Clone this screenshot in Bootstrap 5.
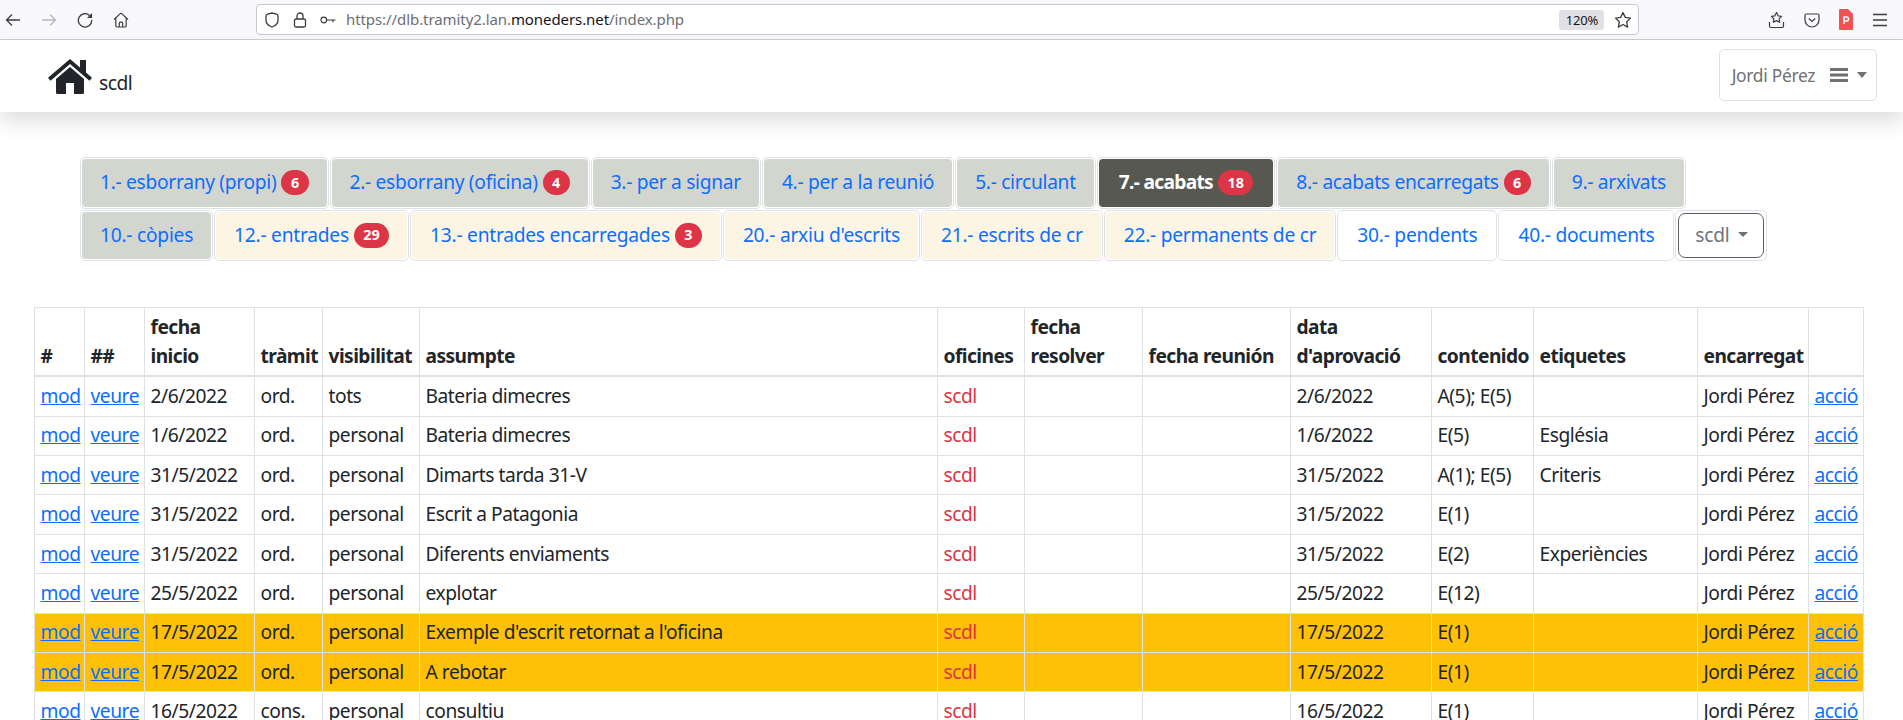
<!DOCTYPE html>
<html lang="ca">
<head>
  <meta charset="UTF-8" />
  <meta name="viewport" content="width=device-width, initial-scale=1" />
  <title>scdl</title>
  <link href="https://cdn.jsdelivr.net/npm/bootstrap@5.3.0/dist/css/bootstrap.min.css" rel="stylesheet" />
  <style>
    html { font-size: 19.2px; }
    body {
      font-family: "Noto Sans", "Liberation Sans", sans-serif;
      letter-spacing: -0.45px;
      color: #212529;
    }

    /* barra del navegador */
    .browser-bar {
      height: 40px;
      background: #f9f9fb;
      border-bottom: 1px solid #cfcfd8;
      font-size: 15px;
      padding: 0 15px 0 0;
    }
    .browser-btn { width: 36px; padding-left: 5px; color: #3c3c42; }
    .browser-btn.off { color: #b5b5ba; }
    .browser-btn svg, .url-box svg, .browser-tools svg { display: block; }
    .url-box {
      width: 1383px;
      height: 31px;
      margin-left: 112px;
      background: #fff;
      border: 1px solid #c8c8cf;
      border-radius: 4px;
      padding: 0 6px 0 7px;
      color: #3c3c42;
    }
    .url-gap { margin-left: 12px; }
    .url-text { color: #6d6d74; margin-left: 10px; letter-spacing: -0.08px; white-space: nowrap; }
    .url-text b { color: #15141a; font-weight: 400; }
    .zoom-chip {
      background: #e0e0e6;
      border-radius: 3px;
      width: 45px;
      height: 20px;
      line-height: 20px;
      font-size: 13px;
      text-align: center;
      color: #15141a;
      letter-spacing: -0.2px;
    }
    .browser-tools { gap: 19px; color: #3c3c42; }

    /* barra superior */
    .top-bar { height: 72px; padding: 0 26px 0 48px; position: relative; z-index: 2; }
    .brand-link { color: #212529; text-decoration: none; font-size: 19.2px; line-height: 1; }
    .brand-link span { margin: 0 0 1px 7px; }
    .user-btn {
      width: 158px;
      height: 52px;
      margin-top: -2px;
      border: 1px solid #dfdfdf;
      border-radius: 5px;
      color: #717171;
      font-size: 17.4px;
      background: #fff;
      padding: 0 0 0 3px;
      letter-spacing: -0.3px;
    }
    .user-btn:hover, .user-btn:focus { color: #717171; border-color: #dfdfdf; }
    .user-menu-icon { margin-left: 5px; }

    /* pestanyes */
    .tab-area { padding: 45px 0 0 80px; letter-spacing: -0.3px; }
    .tab-row { flex-wrap: nowrap; }
    .tab-row-low { letter-spacing: -0.25px; }
    .tab-cell {
      border: 1px solid #dee2e6;
      border-radius: 5px;
      padding: 1px;
      margin-right: 1px;
      height: 51.5px;
      margin-bottom: 1px;
    }
    .tab-cell a {
      display: flex;
      align-items: center;
      gap: 5px;
      height: 100%;
      padding: 0 18px;
      border-radius: 4px;
      color: #0d6efd;
      white-space: nowrap;
      text-decoration: none;
    }
    .tab-grey a { background: #d3d5cf; }
    .tab-cream a { background: #fdf5e3; }
    .tab-cell.tab-on a { background: #575851; color: #fff; font-weight: 700; letter-spacing: -0.7px; padding: 0 20px; }
    .tab-badge { font-size: 14.4px; padding: 5.5px 9.4px; letter-spacing: 0; }
    .office-wrap { border: 1px solid #dee2e6; border-radius: 5px; padding: 2px; height: 51.5px; }
    .office-btn {
      width: 86px;
      height: 45px;
      padding: 0;
      font-size: 19.2px;
      letter-spacing: inherit;
      border-color: #565e64;
      color: #6c757d;
    }
    .office-btn::after { margin-left: 8px; }

    /* taula */
    .table-area { padding: 45px 0 0 34px; }
    .doc-table {
      width: 1829px;
      table-layout: fixed;
      margin: 0;
      border-color: #dee2e6;
    }
    .doc-table thead th { font-weight: 700; line-height: 28.8px; border-bottom-width: 2px; letter-spacing: -0.55px; }
    .doc-table th, .doc-table td { padding: 4.8px 5px 4.8px 5.5px; white-space: nowrap; }
    .doc-table th.wrap-head { white-space: normal; }
    .doc-table tr.row-back > * { background: #ffc107; }
    .office-name { color: #dc3545; }
    .w1 { width: 50px; } .w2 { width: 60px; } .w3 { width: 110px; } .w4 { width: 68px; }
    .w5 { width: 97px; } .w6 { width: 518px; } .w7 { width: 87px; } .w8 { width: 118px; }
    .w9 { width: 148px; } .w10 { width: 141px; } .w11 { width: 102px; } .w12 { width: 164px; }
    .w13 { width: 111px; } .w14 { width: 55px; }
  </style>
</head>
<body class="vh-100 overflow-hidden">

  <div class="browser-bar d-flex align-items-center">
    <div class="browser-btn">
      <svg width="16" height="16" viewBox="0 0 16 16" fill="none" stroke="currentColor" stroke-width="1.3"><path d="M15 8H1.500M7 2.500 1.500 8 7 13.500"/></svg>
    </div>
    <div class="browser-btn off">
      <svg width="16" height="16" viewBox="0 0 16 16" fill="none" stroke="currentColor" stroke-width="1.3"><path d="M1 8h13.500M9 2.500 14.500 8 9 13.500"/></svg>
    </div>
    <div class="browser-btn">
      <svg width="16" height="16" viewBox="0 0 16 16" fill="none" stroke="currentColor" stroke-width="1.3"><path d="M12.800 3.700A6.700 6.700 0 1 0 14.700 8"/><path fill="currentColor" stroke="none" d="M15 1v5h-5z"/></svg>
    </div>
    <div class="browser-btn">
      <svg width="16" height="16" viewBox="0 0 16 16" fill="none" stroke="currentColor" stroke-width="1.200" stroke-linejoin="round"><path d="M1 7.500 7 1.900a1.500 1.500 0 0 1 2 0l6 5.600"/><path d="M2.800 6v7.500a1.500 1.500 0 0 0 1.500 1.500h7.400a1.500 1.500 0 0 0 1.500-1.500V6"/><path d="M6.300 15v-3.800a1 1 0 0 1 1-1h1.400a1 1 0 0 1 1 1V15"/></svg>
    </div>

    <div class="url-box d-flex align-items-center">
      <svg width="16" height="16" viewBox="0 0 16 16" fill="none" stroke="currentColor" stroke-width="1.3"><path d="M8 1 3.500 2.200A2 2 0 0 0 2 4.100V8c0 3.200 2.500 5.800 6 7 3.500-1.200 6-3.800 6-7V4.100a2 2 0 0 0-1.500-1.900z"/></svg>
      <svg class="url-gap" width="16" height="16" viewBox="0 0 16 16" fill="none" stroke="currentColor" stroke-width="1.3"><rect x="2.500" y="7" width="11" height="8" rx="1.500"/><path d="M5 7V4a3 3 0 0 1 6 0v3"/></svg>
      <svg class="url-gap" width="16" height="16" viewBox="0 0 16 16" fill="none" stroke="currentColor" stroke-width="1.200"><circle cx="3.800" cy="8" r="2.800"/><path d="M6.600 8H15.500M13 8v2.200"/></svg>
      <span class="url-text">https://dlb.tramity2.lan.<b>moneders.net</b>/index.php</span>
      <span class="zoom-chip ms-auto">120%</span>
      <svg class="ms-2" width="18" height="18" viewBox="0 0 18 18" fill="none" stroke="currentColor" stroke-width="1.3" stroke-linejoin="round"><path d="m9 1.500 2.300 4.900 5.200.700-3.800 3.700.9 5.300L9 13.500l-4.600 2.600.9-5.300-3.800-3.700 5.200-.700z"/></svg>
    </div>

    <div class="browser-tools d-flex align-items-center ms-auto">
      <svg width="17" height="18" viewBox="0 0 17 18" fill="none" stroke="currentColor" stroke-width="1.200" stroke-linejoin="round"><path d="m8.500 1.500 1.600 3.300 3.500.500-2.500 2.500.6 3.500-3.200-1.700-3.200 1.700.6-3.500-2.500-2.500 3.500-.500z"/><path d="M1.500 11v4a1.500 1.500 0 0 0 1.500 1.500h11a1.500 1.500 0 0 0 1.500-1.500v-4"/></svg>
      <svg width="16" height="16" viewBox="0 0 16 16" fill="none" stroke="currentColor" stroke-width="1.200"><path d="M2.500 2h11A1.500 1.500 0 0 1 15 3.500V8A7 7 0 0 1 1 8V3.500A1.500 1.500 0 0 1 2.500 2z"/><path d="m4.800 6.500 3.200 3 3.200-3"/></svg>
      <svg width="14" height="21" viewBox="0 0 14 21"><path fill="#ed5453" d="M1 0h8l5 5v15a1 1 0 0 1-1 1H1a1 1 0 0 1-1-1V1a1 1 0 0 1 1-1z"/><path fill="none" stroke="#fff" stroke-width="1.500" d="M5 15V8h2.500a2 2 0 0 1 0 4H5"/></svg>
      <svg width="16" height="14" viewBox="0 0 16 14" fill="none" stroke="currentColor" stroke-width="1.300"><path d="M1 1.500h14M1 7h14M1 12.500h14"/></svg>
    </div>
  </div>

  <nav class="top-bar bg-white shadow d-flex align-items-center justify-content-between">
    <a class="brand-link d-flex align-items-end" href="#">
      <svg width="44" height="35" viewBox="0 0 44 35"><path fill="#212529" d="M8 20 22 8l14 12v13.500a1.500 1.500 0 0 1-1.500 1.500H26V24h-8v11H9.500A1.500 1.500 0 0 1 8 33.500z"/><path fill="#212529" d="M22 0 32 8.500V1h6v12.600l6 5.100-2.500 3L22 5 2.500 21.700 0 18.700z"/></svg>
      <span>scdl</span>
    </a>
    <button class="btn user-btn d-flex align-items-center justify-content-center gap-2" type="button">
      Jordi Pérez
      <svg class="user-menu-icon" width="18" height="14" viewBox="0 0 18 14" fill="#717171"><rect width="18" height="3"/><rect y="5.500" width="18" height="3"/><rect y="11" width="18" height="3"/></svg>
      <svg width="10" height="6" viewBox="0 0 10 6" fill="#717171"><path d="M0 0h10L5 6z"/></svg>
    </button>
  </nav>

  <div class="tab-area">
    <ul class="nav tab-row">
      <li class="tab-cell tab-grey"><a href="#">1.- esborrany (propi) <span class="badge rounded-pill text-bg-danger tab-badge">6</span></a></li>
      <li class="tab-cell tab-grey"><a href="#">2.- esborrany (oficina) <span class="badge rounded-pill text-bg-danger tab-badge">4</span></a></li>
      <li class="tab-cell tab-grey"><a href="#">3.- per a signar</a></li>
      <li class="tab-cell tab-grey"><a href="#">4.- per a la reunió</a></li>
      <li class="tab-cell tab-grey"><a href="#">5.- circulant</a></li>
      <li class="tab-cell tab-on"><a href="#">7.- acabats <span class="badge rounded-pill text-bg-danger tab-badge">18</span></a></li>
      <li class="tab-cell tab-grey"><a href="#">8.- acabats encarregats <span class="badge rounded-pill text-bg-danger tab-badge">6</span></a></li>
      <li class="tab-cell tab-grey"><a href="#">9.- arxivats</a></li>
    </ul>
    <ul class="nav tab-row tab-row-low">
      <li class="tab-cell tab-grey"><a href="#">10.- còpies</a></li>
      <li class="tab-cell tab-cream"><a href="#">12.- entrades <span class="badge rounded-pill text-bg-danger tab-badge">29</span></a></li>
      <li class="tab-cell tab-cream"><a href="#">13.- entrades encarregades <span class="badge rounded-pill text-bg-danger tab-badge">3</span></a></li>
      <li class="tab-cell tab-cream"><a href="#">20.- arxiu d'escrits</a></li>
      <li class="tab-cell tab-cream"><a href="#">21.- escrits de cr</a></li>
      <li class="tab-cell tab-cream"><a href="#">22.- permanents de cr</a></li>
      <li class="tab-cell"><a href="#">30.- pendents</a></li>
      <li class="tab-cell"><a href="#">40.- documents</a></li>
      <li class="office-wrap">
        <button class="btn btn-outline-secondary office-btn dropdown-toggle" type="button" data-bs-toggle="dropdown">scdl</button>
      </li>
    </ul>
  </div>

  <div class="table-area">
    <table class="table table-bordered table-sm doc-table">
      <colgroup>
        <col class="w1"><col class="w2"><col class="w3"><col class="w4"><col class="w5"><col class="w6"><col class="w7">
        <col class="w8"><col class="w9"><col class="w10"><col class="w11"><col class="w12"><col class="w13"><col class="w14">
      </colgroup>
      <thead>
        <tr>
          <th>#</th><th>##</th><th class="wrap-head">fecha inicio</th><th>tràmit</th><th>visibilitat</th><th>assumpte</th><th>oficines</th>
          <th class="wrap-head">fecha resolver</th><th>fecha reunión</th><th class="wrap-head">data d'aprovació</th><th>contenido</th><th>etiquetes</th><th>encarregat</th><th></th>
        </tr>
      </thead>
      <tbody id="rows"></tbody>
    </table>
  </div>

  <script src="https://cdn.jsdelivr.net/npm/bootstrap@5.3.0/dist/js/bootstrap.bundle.min.js"></script>
  <script>
    // files de la taula
    const files = [
      ["2/6/2022", "ord.", "tots", "Bateria dimecres", "A(5); E(5)", ""],
      ["1/6/2022", "ord.", "personal", "Bateria dimecres", "E(5)", "Església"],
      ["31/5/2022", "ord.", "personal", "Dimarts tarda 31-V", "A(1); E(5)", "Criteris"],
      ["31/5/2022", "ord.", "personal", "Escrit a Patagonia", "E(1)", ""],
      ["31/5/2022", "ord.", "personal", "Diferents enviaments", "E(2)", "Experiències"],
      ["25/5/2022", "ord.", "personal", "explotar", "E(12)", ""],
      ["17/5/2022", "ord.", "personal", "Exemple d'escrit retornat a l'oficina", "E(1)", "", true],
      ["17/5/2022", "ord.", "personal", "A rebotar", "E(1)", "", true],
      ["16/5/2022", "cons.", "personal", "consultiu", "E(1)", ""],
    ];
    document.getElementById("rows").innerHTML = files.map((f) => `
      <tr class="${f[6] ? "row-back" : ""}">
        <td><a href="#">mod</a></td><td><a href="#">veure</a></td>
        <td>${f[0]}</td><td>${f[1]}</td><td>${f[2]}</td><td>${f[3]}</td>
        <td class="office-name">scdl</td><td></td><td></td>
        <td>${f[0]}</td><td>${f[4]}</td><td>${f[5]}</td>
        <td>Jordi Pérez</td><td><a href="#">acció</a></td>
      </tr>`).join("");
  </script>
</body>
</html>
